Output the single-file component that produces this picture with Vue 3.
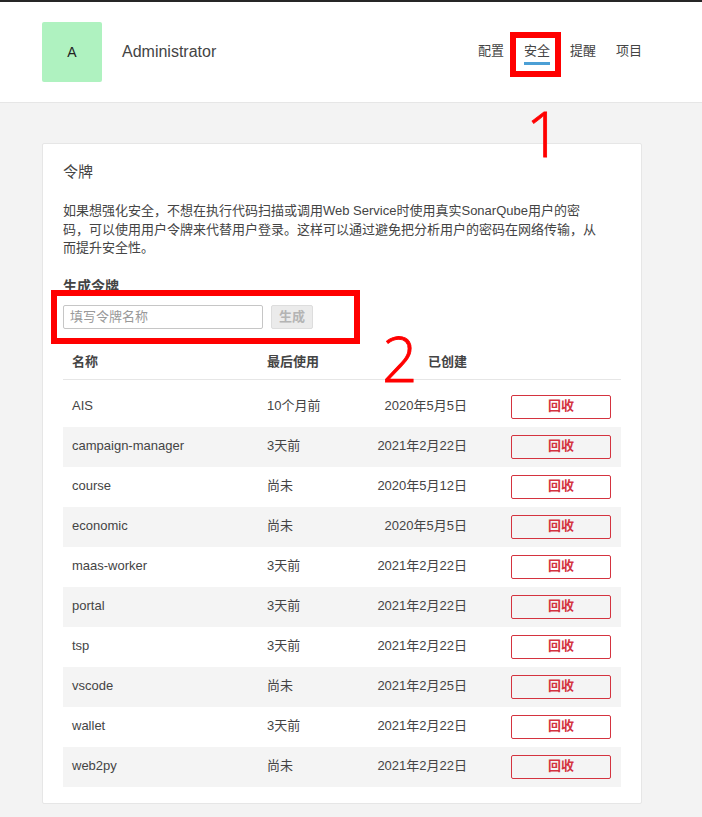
<script setup>
const tokens = [
  ['AIS', '10个月前', '2020年5月5日'],
  ['campaign-manager', '3天前', '2021年2月22日'],
  ['course', '尚未', '2020年5月12日'],
  ['economic', '尚未', '2020年5月5日'],
  ['maas-worker', '3天前', '2021年2月22日'],
  ['portal', '3天前', '2021年2月22日'],
  ['tsp', '3天前', '2021年2月22日'],
  ['vscode', '尚未', '2021年2月25日'],
  ['wallet', '3天前', '2021年2月22日'],
  ['web2py', '尚未', '2021年2月22日'],
]
</script>

<template>
  <div class="page">
    <header class="top">
      <div class="avatar">A</div>
      <h1 class="user">Administrator</h1>
      <nav class="nav">
        <a class="tab">配置</a>
        <a class="tab active">安全</a>
        <a class="tab">提醒</a>
        <a class="tab">项目</a>
      </nav>
    </header>

    <main class="main">
      <section class="card">
        <h2 class="title">令牌</h2>
        <p class="desc">如果想强化安全，不想在执行代码扫描或调用Web Service时使用真实SonarQube用户的密码，可以使用用户令牌来代替用户登录。这样可以通过避免把分析用户的密码在网络传输，从而提升安全性。</p>
        <h3 class="sub">生成令牌</h3>
        <form class="gen" @submit.prevent>
          <input class="input" type="text" placeholder="填写令牌名称" />
          <button class="gen-btn" type="button" disabled>生成</button>
        </form>
        <div class="thead">
          <span>名称</span>
          <span>最后使用</span>
          <span class="right">已创建</span>
          <span></span>
        </div>
        <div class="tbody">
          <div v-for="t in tokens" :key="t[0]" class="row">
            <span>{{ t[0] }}</span>
            <span>{{ t[1] }}</span>
            <span class="right">{{ t[2] }}</span>
            <button class="revoke" type="button">回收</button>
          </div>
        </div>
      </section>
    </main>

    <div class="mark mark-nav"></div>
    <div class="mark mark-form"></div>
    <span class="num num-1">1</span>
    <span class="num num-2">2</span>
  </div>
</template>

<style scoped>
.page {
  position: relative;
  width: 702px;
  height: 817px;
  overflow: hidden;
  background: #f3f3f3;
  color: #444;
  font-family: "Liberation Sans", "Noto Sans CJK SC", sans-serif;
  font-size: 13px;
}
.top {
  box-sizing: border-box;
  height: 103px;
  display: flex;
  align-items: center;
  padding: 0 60px 0 42px;
  background: #fff;
  border-top: 2px solid #262626;
  border-bottom: 1px solid #e6e6e6;
}
.avatar {
  width: 60px;
  height: 60px;
  display: flex;
  align-items: center;
  justify-content: center;
  border-radius: 2px;
  background: #aff2c0;
  color: #222;
  font-size: 14px;
}
.user {
  margin: 0 0 0 20px;
  font-size: 16px;
  font-weight: 400;
  color: #444;
}
.nav {
  margin-left: auto;
  display: flex;
  gap: 20px;
  align-self: flex-start;
  padding-top: 40px;
}
.tab {
  height: 23px;
  line-height: 18px;
  color: #444;
  box-sizing: border-box;
}
.tab.active {
  border-bottom: 3px solid #4b9fd5;
}
.main {
  padding: 40px 60px 0 42px;
}
.card {
  box-sizing: border-box;
  width: 600px;
  height: 661px;
  padding: 16px 20px 0;
  background: #fff;
  border: 1px solid #e6e6e6;
  border-radius: 2px;
}
.title {
  margin: 0;
  font-size: 15px;
  line-height: 24px;
  font-weight: 400;
}
.desc {
  margin: 18px 0 0;
  width: 535px;
  line-height: 18.5px;
}
.sub {
  margin: 19px 0 0;
  font-size: 14px;
  line-height: 18px;
  font-weight: 700;
}
.gen {
  display: flex;
  gap: 8px;
  margin-top: 10px;
}
.input {
  box-sizing: border-box;
  width: 200px;
  height: 24px;
  padding: 0 6px;
  border: 1px solid #c6c6c6;
  border-radius: 2px;
  background: #fff;
  font: inherit;
  color: #444;
}
.input::placeholder {
  color: #999;
  opacity: 1;
}
.gen-btn {
  box-sizing: border-box;
  width: 42px;
  height: 24px;
  padding: 0 0 3px;
  border: 1px solid #ddd;
  border-radius: 2px;
  background: #ebebeb;
  color: #b4b4b4;
  font: inherit;
  font-weight: 700;
}
.thead,
.row {
  display: grid;
  grid-template-columns: 195px 80px 120px 1fr;
  padding: 0 10px 0 9px;
}
.thead {
  height: 36px;
  margin-top: 14px;
  align-items: center;
  border-bottom: 1px solid #e6e6e6;
  font-weight: 700;
}
.tbody {
  margin-top: 7px;
}
.row {
  box-sizing: border-box;
  height: 40px;
  padding-top: 10px;
  line-height: 18px;
}
.row:nth-child(even) {
  background: #f4f4f4;
}
.right {
  text-align: right;
}
.revoke {
  box-sizing: border-box;
  justify-self: end;
  width: 100px;
  height: 24px;
  margin-top: -2px;
  padding: 0 0 2px;
  border: 1px solid #d4333f;
  border-radius: 2px;
  background: transparent;
  color: #d4333f;
  font: inherit;
  font-weight: 700;
}
.mark {
  position: absolute;
  box-sizing: border-box;
  border: 6px solid #f00;
}
.mark-nav {
  left: 510px;
  top: 32px;
  width: 51px;
  height: 45px;
}
.mark-form {
  left: 51px;
  top: 290px;
  width: 309px;
  height: 54px;
}
.num {
  position: absolute;
  color: #f00;
  font-family: "Open Sans", sans-serif;
  font-weight: 300;
  line-height: 1;
  -webkit-text-stroke: 0.8px #f00;
}
.num-1 {
  left: 526px;
  top: 102px;
  font-size: 62px;
}
.num-2 {
  left: 382px;
  top: 327px;
  font-size: 62px;
}
</style>
